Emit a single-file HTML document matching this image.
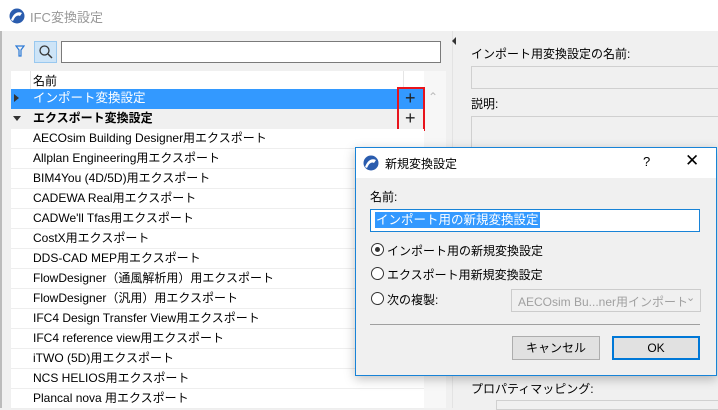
<!DOCTYPE html>
<html><head><meta charset="utf-8"><style>
*{box-sizing:border-box;margin:0;padding:0}
body{width:718px;height:408px;overflow:hidden;background:#f0f0f0;font-family:"Liberation Sans","Noto Sans CJK JP",sans-serif;font-size:12px;color:#000;position:relative}
.a{position:absolute}
.row{position:absolute;left:11px;width:413px;height:20px;line-height:19px;padding-left:22px;background:#fff;border-bottom:1px solid #eeeeee;white-space:nowrap}
</style></head><body>
<div class="a" style="left:0;top:0;width:718px;height:31px;background:#fff"></div>
<div class="a" style="left:0;top:31px;width:2px;height:377px;background:#bbb"></div>
<svg class="a" style="left:9px;top:8px" width="16" height="16"><circle cx="8" cy="8" r="7.5" fill="#2a5cae"/><path d="M2 12 Q6 2 13 5 L11 8 Q7 6 4 13Z" fill="#fff"/></svg>
<div class="a" style="left:30px;top:7px;font-size:13px;color:#999">IFC変換設定</div>
<svg class="a" style="left:15px;top:45px" width="10" height="12"><path d="M1 1 H9 L6 5 V11 H4 V5 Z" fill="none" stroke="#2c7ad6" stroke-width="1.2"/></svg>
<div class="a" style="left:34px;top:41px;width:23px;height:22px;background:#cde4f7;border:1px solid #99c8ef"></div>
<svg class="a" style="left:38px;top:44px" width="16" height="16"><circle cx="6.5" cy="6.5" r="4.5" fill="none" stroke="#333" stroke-width="1.3"/><path d="M10 10 L14 14" stroke="#333" stroke-width="1.5"/></svg>
<div class="a" style="left:61px;top:41px;width:380px;height:22px;background:#fff;border:1px solid #7a7a7a"></div>
<div class="a" style="left:11px;top:71px;width:413px;height:18px;background:#fff"></div>
<div class="a" style="left:30px;top:71px;width:1px;height:18px;background:#e5e5e5"></div>
<div class="a" style="left:403px;top:71px;width:1px;height:18px;background:#e5e5e5"></div>
<div class="a" style="left:33px;top:72px;font-size:12px">名前</div>
<div class="row" style="top:89px;background:#3399ff;color:#fff;border:none;font-size:12.5px">インポート変換設定</div>
<div class="a" style="left:14px;top:94px;width:0;height:0;border-left:5px solid #333;border-top:4px solid transparent;border-bottom:4px solid transparent"></div>
<div class="row" style="top:109px;background:#f0f0f0;font-weight:bold;border:none">エクスポート変換設定</div>
<div class="a" style="left:13px;top:116px;width:0;height:0;border-top:5px solid #333;border-left:4px solid transparent;border-right:4px solid transparent"></div>
<div class="a" style="left:424px;top:71px;width:22px;height:337px;background:#f7f7f7"></div>
<div class="a" style="left:428px;top:90px;color:#bbb;font-size:12px">&#8963;</div>
<div class="a" style="left:397px;top:87px;width:28px;height:44px;border:2px solid #e8141c"></div>
<div class="a" style="left:405px;top:89px;font-size:18px;line-height:18px;color:#222">+</div>
<div class="a" style="left:405px;top:109px;font-size:18px;line-height:18px;color:#222">+</div>
<div class="row" style="top:129px">AECOsim Building Designer用エクスポート</div>
<div class="row" style="top:149px">Allplan Engineering用エクスポート</div>
<div class="row" style="top:169px">BIM4You (4D/5D)用エクスポート</div>
<div class="row" style="top:189px">CADEWA Real用エクスポート</div>
<div class="row" style="top:209px">CADWe'll Tfas用エクスポート</div>
<div class="row" style="top:229px">CostX用エクスポート</div>
<div class="row" style="top:249px">DDS-CAD MEP用エクスポート</div>
<div class="row" style="top:269px">FlowDesigner（通風解析用）用エクスポート</div>
<div class="row" style="top:289px">FlowDesigner（汎用）用エクスポート</div>
<div class="row" style="top:309px">IFC4 Design Transfer View用エクスポート</div>
<div class="row" style="top:329px">IFC4 reference view用エクスポート</div>
<div class="row" style="top:349px">iTWO (5D)用エクスポート</div>
<div class="row" style="top:369px">NCS HELIOS用エクスポート</div>
<div class="row" style="top:389px">Plancal nova 用エクスポート</div>
<div class="a" style="left:452px;top:31px;width:1px;height:377px;background:#e3e3e3"></div>
<div class="a" style="left:452px;top:37px;width:0;height:0;border-right:4px solid #333;border-top:4px solid transparent;border-bottom:4px solid transparent"></div>
<div class="a" style="left:471px;top:45px">インポート用変換設定の名前:</div>
<div class="a" style="left:471px;top:66px;width:260px;height:23px;border:1px solid #d0d0d0;background:#f0f0f0"></div>
<div class="a" style="left:471px;top:95px">説明:</div>
<div class="a" style="left:471px;top:116px;width:260px;height:40px;border:1px solid #d0d0d0;border-bottom:none"></div>
<div class="a" style="left:471px;top:380px">プロパティマッピング:</div>
<div class="a" style="left:496px;top:400px;width:230px;height:10px;border:1px solid #d0d0d0"></div>
<!-- dialog -->
<div class="a" style="left:355px;top:147px;width:362px;height:229px;background:#f0f0f0;border:1px solid #1883d7;box-shadow:0 3px 10px rgba(0,0,0,.25)">
 <div class="a" style="left:0;top:0;width:360px;height:30px;background:#fff"></div>
 <svg class="a" style="left:7px;top:7px" width="16" height="16"><circle cx="8" cy="8" r="7.5" fill="#2a5cae"/><path d="M2 12 Q6 2 13 5 L11 8 Q7 6 4 13Z" fill="#fff"/></svg>
 <div class="a" style="left:29px;top:7px">新規変換設定</div>
 <div class="a" style="left:287px;top:6px;font-size:13px">?</div>
 <div class="a" style="left:329px;top:3px;font-size:17px;font-weight:300">✕</div>
 <div class="a" style="left:14px;top:40px">名前:</div>
 <div class="a" style="left:14px;top:61px;width:330px;height:23px;background:#fff;border:1px solid #1883d7"></div>
 <div class="a" style="left:19px;top:64px;background:#3399ff;color:#fff;font-size:12.5px;line-height:16px;padding:0 1px">インポート用の新規変換設定</div>
 <div class="a" style="left:15px;top:95px;width:13px;height:13px;border:1px solid #333;border-radius:50%;background:#fff"></div>
 <div class="a" style="left:19px;top:99px;width:5px;height:5px;border-radius:50%;background:#333"></div>
 <div class="a" style="left:31px;top:94px">インポート用の新規変換設定</div>
 <div class="a" style="left:15px;top:119px;width:13px;height:13px;border:1px solid #333;border-radius:50%;background:#fff"></div>
 <div class="a" style="left:31px;top:118px">エクスポート用新規変換設定</div>
 <div class="a" style="left:15px;top:144px;width:13px;height:13px;border:1px solid #333;border-radius:50%;background:#fff"></div>
 <div class="a" style="left:31px;top:143px">次の複製:</div>
 <div class="a" style="left:155px;top:141px;width:190px;height:23px;border:1px solid #ccc;background:#f0f0f0"></div>
 <div class="a" style="left:162px;top:145px;color:#a0a0a0">AECOsim Bu...ner用インポート</div>
 <div class="a" style="left:330px;top:143px;color:#a0a0a0;font-size:11px">&#8964;</div>
 <div class="a" style="left:14px;top:176px;width:330px;height:1px;background:#a0a0a0"></div>
 <div class="a" style="left:156px;top:188px;width:88px;height:24px;border:1px solid #adadad;background:#e1e1e1;text-align:center;line-height:22px">キャンセル</div>
 <div class="a" style="left:256px;top:188px;width:88px;height:24px;border:2px solid #0078d7;background:#e1e1e1;text-align:center;line-height:20px">OK</div>
</div>
</body></html>
